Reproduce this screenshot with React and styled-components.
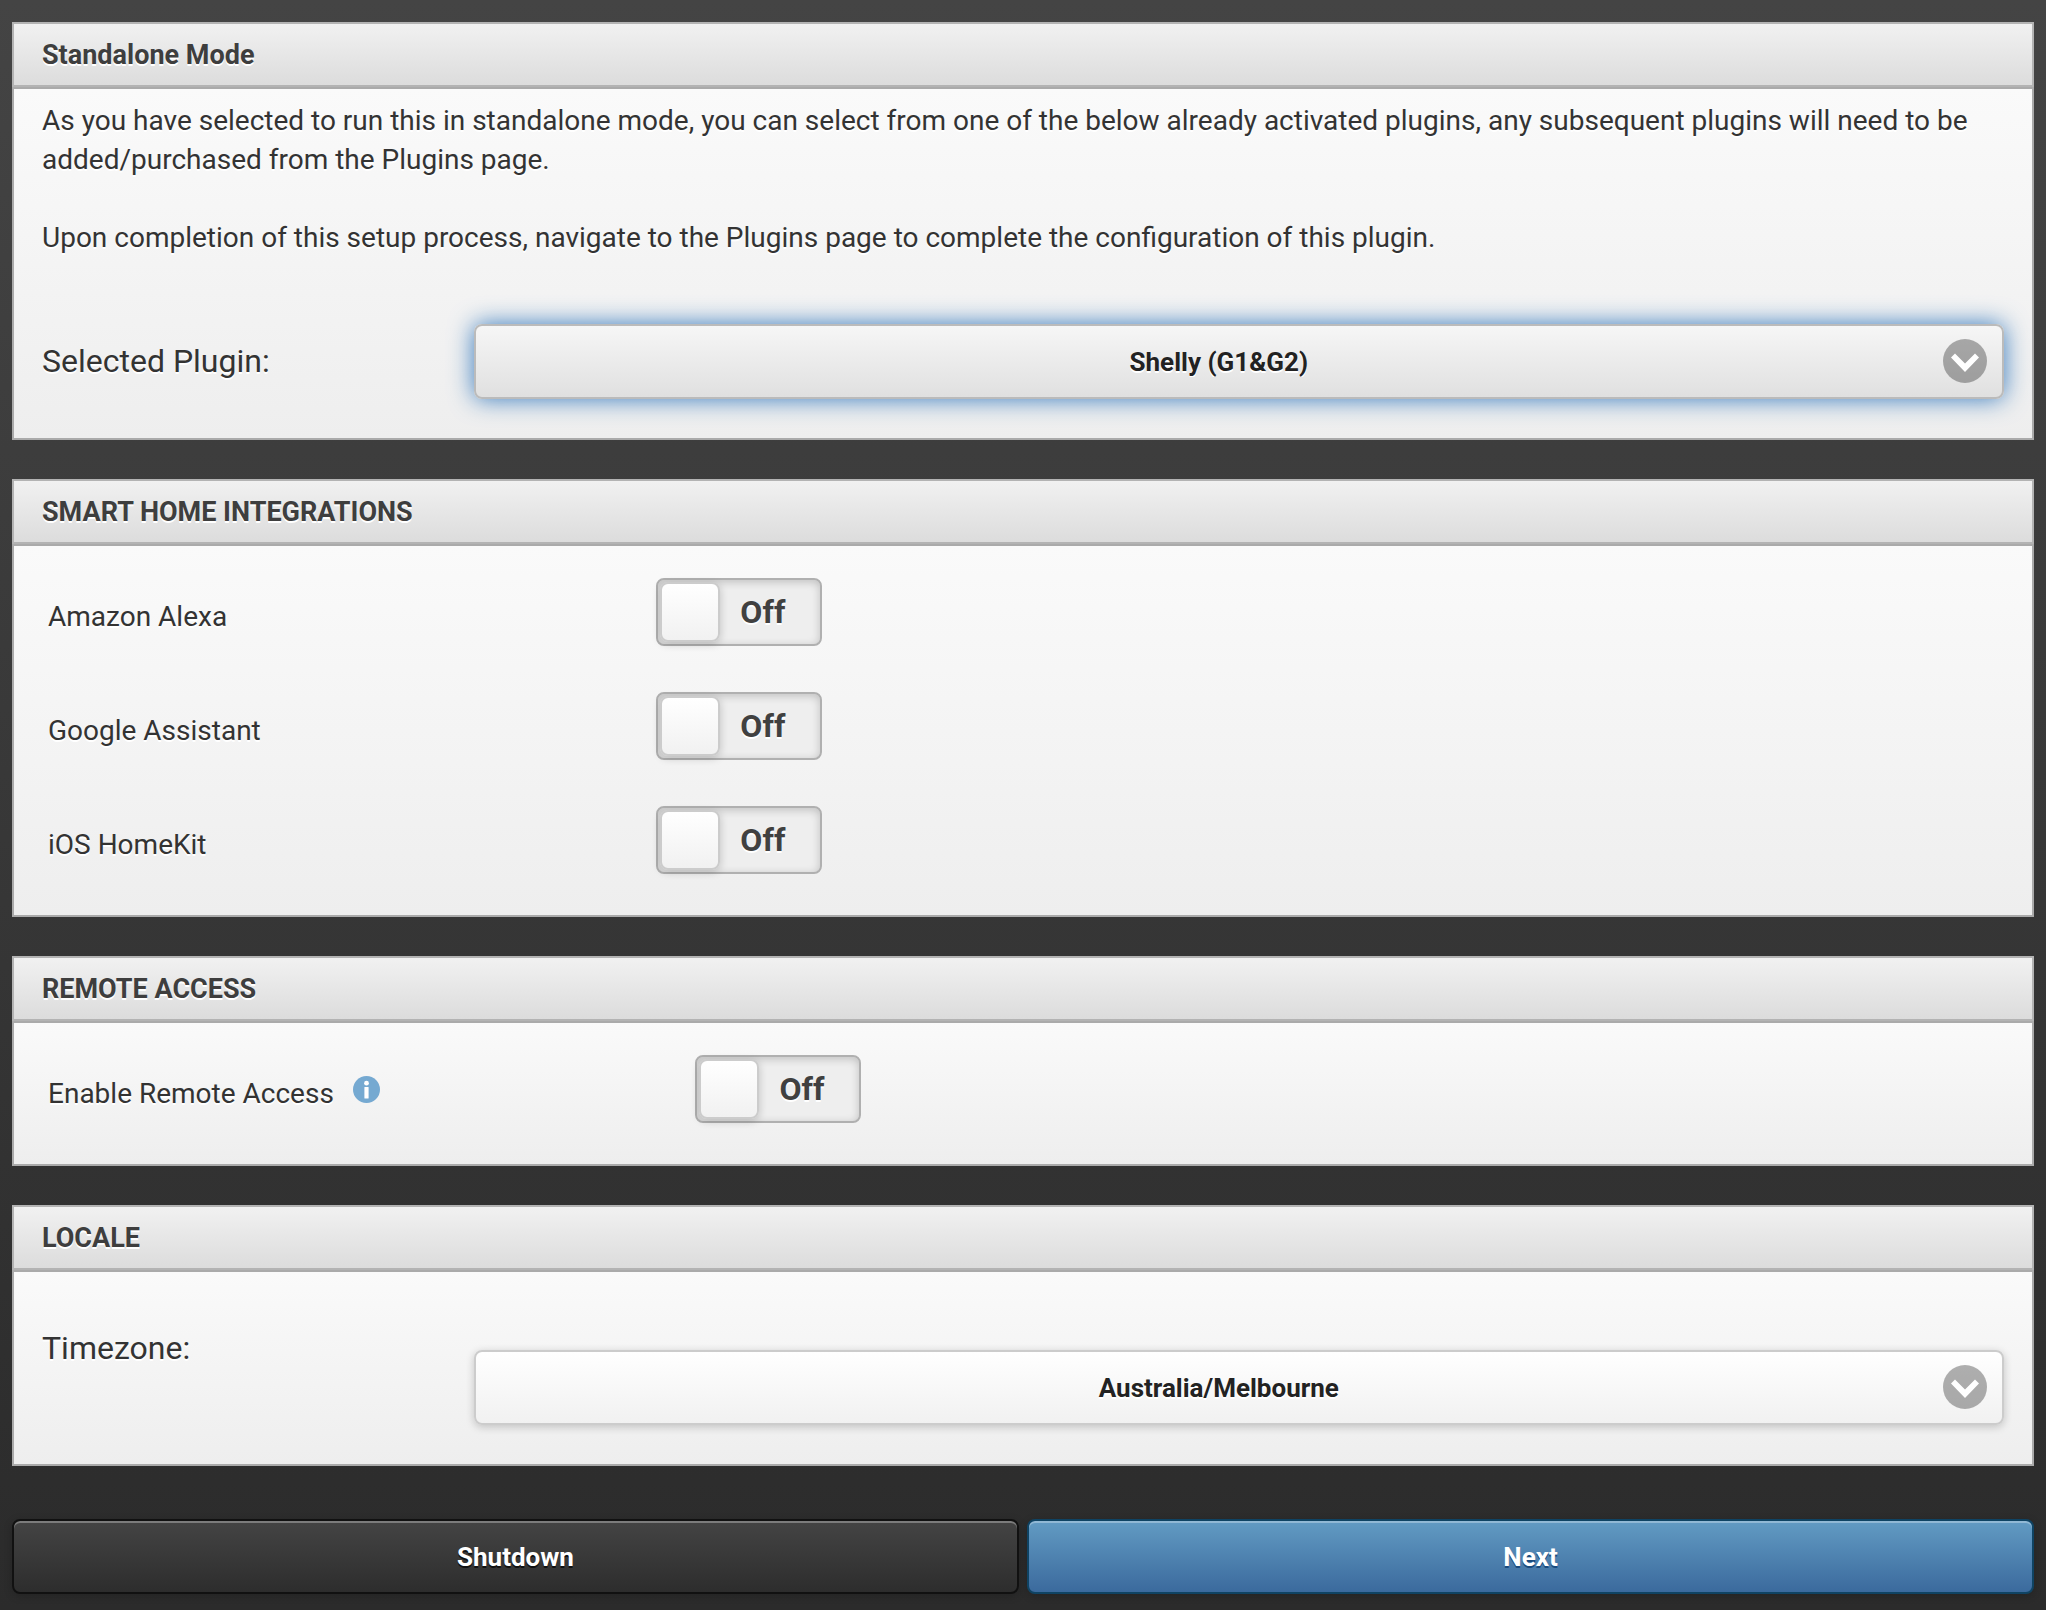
import { useState } from "react";
import styled, { createGlobalStyle, css } from "styled-components";

const integrations = [
  { id: "alexa", name: "Amazon Alexa" },
  { id: "google", name: "Google Assistant" },
  { id: "homekit", name: "iOS HomeKit" },
];

const plugins = ["Shelly (G1&G2)"];
const timezones = ["Australia/Melbourne"];

const Chevron = () => (
  <SelectIcon viewBox="0 0 44 44" aria-hidden="true">
    <circle cx="22" cy="22" r="22" fill="#000" fillOpacity="0.31" />
    <path d="M8 18.6 L12 14.6 L22 24.4 L32 14.6 L36 18.6 L22 33 Z" fill="#fff" />
  </SelectIcon>
);

const SelectMenu = ({ id, options, highlighted }) => {
  const [value, setValue] = useState(options[0]);

  return (
    <SelectWrapper>
      <Select
        id={id}
        value={value}
        $highlighted={highlighted}
        onChange={(e) => setValue(e.target.value)}
      >
        {options.map((option) => (
          <option key={option}>{option}</option>
        ))}
      </Select>
      <Chevron />
    </SelectWrapper>
  );
};

const FlipSwitch = ({ id }) => {
  const [on, setOn] = useState(false);

  return (
    <Flip $on={on}>
      <FlipInput
        id={id}
        type="checkbox"
        checked={on}
        onChange={(e) => setOn(e.target.checked)}
      />
      <FlipKnob />
      <FlipText>{on ? "On" : "Off"}</FlipText>
    </Flip>
  );
};

const App = () => {
  return (
    <>
      <GlobalStyle />
      <Page>
        <Panels>
          <Panel>
            <PanelHeader>Standalone Mode</PanelHeader>
            <PanelBody>
              <Text>
                As you have selected to run this in standalone mode, you can
                select from one of the below already activated plugins, any
                subsequent plugins will need to be added/purchased from the
                Plugins page.
              </Text>
              <Text>
                Upon completion of this setup process, navigate to the Plugins
                page to complete the configuration of this plugin.
              </Text>
              <Field>
                <FieldLabel htmlFor="plugin">Selected Plugin:</FieldLabel>
                <SelectMenu id="plugin" options={plugins} highlighted />
              </Field>
            </PanelBody>
          </Panel>

          <Panel>
            <PanelHeader>SMART HOME INTEGRATIONS</PanelHeader>
            <SwitchList>
              {integrations.map((item) => (
                <SwitchRow key={item.id}>
                  <SwitchLabel htmlFor={item.id}>{item.name}</SwitchLabel>
                  <FlipSwitch id={item.id} />
                </SwitchRow>
              ))}
            </SwitchList>
          </Panel>

          <Panel>
            <PanelHeader>REMOTE ACCESS</PanelHeader>
            <SwitchList>
              <SwitchRow $wide>
                <LabelGroup>
                  <SwitchLabel htmlFor="remote">Enable Remote Access</SwitchLabel>
                  <InfoButton type="button" aria-label="About remote access">
                    <svg viewBox="0 0 27 27" width="27" height="27">
                      <circle cx="13.5" cy="13.5" r="13.5" fill="#75a9d1" />
                      <circle cx="13.5" cy="7.2" r="2.4" fill="#fff" />
                      <rect x="11.4" y="11" width="4.2" height="11.6" rx="0.6" fill="#fff" />
                    </svg>
                  </InfoButton>
                </LabelGroup>
                <FlipSwitch id="remote" />
              </SwitchRow>
            </SwitchList>
          </Panel>

          <Panel>
            <PanelHeader>LOCALE</PanelHeader>
            <PanelBody>
              <Field $stacked>
                <FieldLabel htmlFor="timezone">Timezone:</FieldLabel>
                <SelectMenu id="timezone" options={timezones} />
              </Field>
            </PanelBody>
          </Panel>
        </Panels>

        <Actions>
          <Button type="button">Shutdown</Button>
          <Button type="button" $primary>
            Next
          </Button>
        </Actions>
      </Page>
    </>
  );
};

const GlobalStyle = createGlobalStyle`
  * {
    box-sizing: border-box;
  }

  body {
    margin: 0;
    font-family: Roboto, "Liberation Sans", sans-serif;
    font-size: 28px;
    line-height: 39px;
    color: #333;
  }

  button, select, input {
    font-family: inherit;
  }
`;

const Page = styled.main`
  min-height: 100vh;
  padding: 22px 12px 16px;
  background: linear-gradient(#444, #2b2b2b);
`;

const Panels = styled.div`
  display: flex;
  flex-direction: column;
  gap: 39px;
`;

const Panel = styled.section`
  display: flex;
  flex-direction: column;
  text-shadow: 0 2px 0 #fff;
`;

const PanelHeader = styled.h2`
  margin: 0;
  padding: 13px 28px 11px;
  border: 2px solid #b3b3b3;
  font-size: 27px;
  font-weight: 700;
  line-height: 37px;
  color: #3e3e3e;
  background: linear-gradient(#f1f1f1, #dcdcdc);
`;

const PanelBody = styled.div`
  padding: 12px 28px 39px;
  border: 2px solid #aaa;
  background: linear-gradient(#fafafa, #eee);
`;

const SwitchList = styled(PanelBody)`
  display: flex;
  flex-direction: column;
  gap: 46px;
  padding: 32px 28px 41px 34px;
`;

const Text = styled.p`
  margin: 0;

  & + & {
    margin-top: 39px;
  }
`;

const SelectWrapper = styled.div`
  position: relative;
`;

const Field = styled.div`
  display: grid;
  grid-template-columns: 22% 1fr;
  align-items: center;
  margin-top: 67px;

  ${({ $stacked }) =>
    $stacked &&
    css`
      align-items: start;
      margin-top: 45px;

      ${SelectWrapper} {
        margin-top: 21px;
      }
    `}
`;

const FieldLabel = styled.label`
  font-size: 32px;
`;

const Select = styled.select`
  display: block;
  width: 100%;
  height: 75px;
  margin: 0;
  padding: 0 80px 0 40px;
  border: 2px solid #ccc;
  border-radius: 8px;
  appearance: none;
  outline: none;
  font-size: 26px;
  font-weight: 700;
  text-align: center;
  text-align-last: center;
  color: #222;
  text-shadow: 0 2px 0 #fff;
  background: linear-gradient(#fff, #f1f1f1);
  box-shadow: 0 2px 8px rgba(0, 0, 0, 0.2);
  cursor: pointer;

  ${({ $highlighted }) =>
    $highlighted &&
    css`
      border-color: #bbb;
      background: linear-gradient(#f6f6f6, #e0e0e0);
      box-shadow: 0 0 24px #387bbe;
    `}
`;

const SelectIcon = styled.svg`
  position: absolute;
  top: 15px;
  right: 17px;
  width: 44px;
  height: 44px;
  pointer-events: none;
`;

const SwitchRow = styled.div`
  display: grid;
  grid-template-columns: ${({ $wide }) => ($wide ? "33%" : "31%")} 1fr;
  column-gap: 2px;
  align-items: center;
`;

const LabelGroup = styled.div`
  display: flex;
  align-items: center;
  gap: 19px;
`;

const SwitchLabel = styled.label`
  padding-top: 8px;
`;

const InfoButton = styled.button`
  display: flex;
  padding: 0;
  border: none;
  background: none;
  cursor: pointer;
`;

const Flip = styled.div`
  position: relative;
  display: flex;
  flex-direction: ${({ $on }) => ($on ? "row-reverse" : "row")};
  align-items: center;
  gap: 20px;
  width: 166px;
  height: 68px;
  padding: 2px;
  border: 2px solid #b0b0b0;
  border-radius: 8px;
  background: #eee;
  box-shadow: inset 0 2px 8px rgba(0, 0, 0, 0.2);
`;

const FlipInput = styled.input`
  position: absolute;
  inset: 0;
  width: 100%;
  height: 100%;
  margin: 0;
  opacity: 0;
  cursor: pointer;
`;

const FlipKnob = styled.span`
  width: 60px;
  height: 60px;
  border: 2px solid #ccc;
  border-radius: 8px;
  background: linear-gradient(#fff, #f1f1f1);
  box-shadow: 0 2px 8px rgba(0, 0, 0, 0.2);
`;

const FlipText = styled.span`
  font-size: 32px;
  font-weight: 700;
  color: #404040;
`;

const Actions = styled.div`
  display: grid;
  grid-template-columns: 1fr 1fr;
  gap: 8px;
  margin-top: 53px;
`;

const Button = styled.button`
  height: 75px;
  border: 2px solid ${({ $primary }) => ($primary ? "#0f4363" : "#111")};
  border-radius: 8px;
  font-size: 26px;
  font-weight: 700;
  color: #fff;
  text-shadow: 0 2px 0 ${({ $primary }) => ($primary ? "#194b7e" : "#111")};
  background: ${({ $primary }) =>
    $primary
      ? "linear-gradient(#629bc3, #3b6a9d)"
      : "linear-gradient(#444, #2d2d2d)"};
  box-shadow: inset 0 2px 0 rgba(255, 255, 255, 0.3),
    0 2px 8px rgba(0, 0, 0, 0.2);
  cursor: pointer;
`;

export default App;
